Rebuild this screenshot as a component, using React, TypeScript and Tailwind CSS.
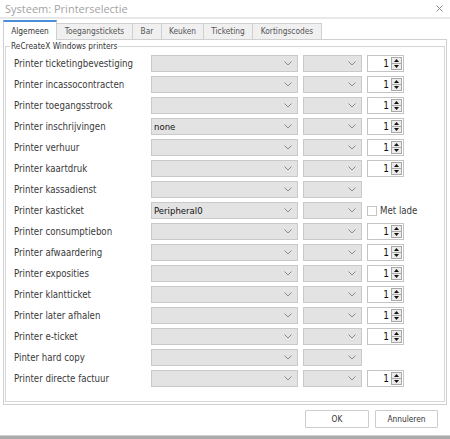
import React from 'react';

type Row = { label: string; value?: string; extra: 'spin' | 'none' | 'check' };

const rows: Row[] = [
  { label: 'Printer ticketingbevestiging', extra: 'spin' },
  { label: 'Printer incassocontracten', extra: 'spin' },
  { label: 'Printer toegangsstrook', extra: 'spin' },
  { label: 'Printer inschrijvingen', value: 'none', extra: 'spin' },
  { label: 'Printer verhuur', extra: 'spin' },
  { label: 'Printer kaartdruk', extra: 'spin' },
  { label: 'Printer kassadienst', extra: 'none' },
  { label: 'Printer kasticket', value: 'Peripheral0', extra: 'check' },
  { label: 'Printer consumptiebon', extra: 'spin' },
  { label: 'Printer afwaardering', extra: 'spin' },
  { label: 'Printer exposities', extra: 'spin' },
  { label: 'Printer klantticket', extra: 'spin' },
  { label: 'Printer later afhalen', extra: 'spin' },
  { label: 'Printer e-ticket', extra: 'spin' },
  { label: 'Pinter hard copy', extra: 'none' },
  { label: 'Printer directe factuur', extra: 'spin' },
];

const tabs = [
  { name: 'Algemeen', w: 'w-[54px]', active: true },
  { name: 'Toegangstickets', w: 'w-[77px]' },
  { name: 'Bar', w: 'w-[30px]' },
  { name: 'Keuken', w: 'w-[43px]' },
  { name: 'Ticketing', w: 'w-[50px]' },
  { name: 'Kortingscodes', w: 'w-[70px]' },
];

function Chevron() {
  return (
    <svg width="8" height="5" viewBox="0 0 8 5" className="shrink-0">
      <polyline points="0.5,0.5 4,4 7.5,0.5" fill="none" stroke="#8a8a8a" strokeWidth="1" />
    </svg>
  );
}

function Combo({ value, w }: { value?: string; w: string }) {
  return (
    <div className={`${w} h-[17px] bg-[#e3e3e3] border border-[#c9c9c9] flex items-center justify-between pl-[2px] pr-[5px]`}>
      <span className="text-[9.5px] text-[#111] leading-none">{value ?? ''}</span>
      <Chevron />
    </div>
  );
}

function Spin() {
  return (
    <div className="w-[37px] h-[17px] bg-white border border-[#c4c4c4] flex items-center justify-end pr-[1px]">
      <span className="text-[10px] text-[#111] leading-none mr-[2px]">1</span>
      <div className="w-[11px] h-[13px] flex flex-col border border-[#a9a9a9] bg-[#ececec]">
        <div className="flex-1 flex items-center justify-center border-b border-[#a9a9a9]">
          <svg width="5" height="3" viewBox="0 0 5 3"><polygon points="2.5,0 5,3 0,3" fill="#111" /></svg>
        </div>
        <div className="flex-1 flex items-center justify-center">
          <svg width="5" height="3" viewBox="0 0 5 3"><polygon points="0,0 5,0 2.5,3" fill="#111" /></svg>
        </div>
      </div>
    </div>
  );
}

export default function App() {
  return (
    <div className="w-[450px] h-[439px] bg-white flex flex-col overflow-hidden font-['DejaVu_Sans_Condensed','DejaVu_Sans',sans-serif] text-[#3a3a3a]">
      {/* title bar */}
      <div className="h-[19px] shrink-0 flex items-center justify-between pl-[5px] pr-[7px] border-b-2 border-[#e8e8e8]">
        <span className="font-['Open_Sans',sans-serif] text-[11px] text-[#a3a3a3] leading-none">Systeem: Printerselectie</span>
        <svg width="7" height="7" viewBox="0 0 7 7">
          <line x1="0.5" y1="0.5" x2="6.5" y2="6.5" stroke="#8c8c8c" strokeWidth="1" />
          <line x1="6.5" y1="0.5" x2="0.5" y2="6.5" stroke="#8c8c8c" strokeWidth="1" />
        </svg>
      </div>

      {/* tabs */}
      <div className="flex items-end h-[19px] pl-[3px] mt-[1px] shrink-0 relative z-10">
        {tabs.map((t) =>
          t.active ? (
            <div
              key={t.name}
              className={`${t.w} h-[20px] -mb-px bg-white border-t-2 border-t-[#4a90d9] border-x border-x-[#cfcfcf] flex items-center justify-center text-[8.3px] text-[#333]`}
            >
              {t.name}
            </div>
          ) : (
            <div
              key={t.name}
              className={`${t.w} h-[16px] bg-[#f0f0f0] border border-b-0 border-[#d0d0d0] -ml-px first:ml-0 flex items-center justify-center text-[8.3px] text-[#555]`}
            >
              {t.name}
            </div>
          )
        )}
      </div>

      {/* panel */}
      <div className="ml-[3px] w-[444px] h-[366px] shrink-0 border border-[#d0d0d0] px-px pb-[2px]">
        <fieldset className="border border-[#d6d6d6] h-full px-0 pt-0 pb-0 m-0">
          <legend className="ml-[4px] px-[1px] text-[8.3px] leading-[12px] text-[#333]">ReCreateX Windows printers</legend>
          <div className="pl-[8px] pt-px flex flex-col">
            {rows.map((r) => (
              <div key={r.label} className="h-[21px] flex items-center">
                <div className="w-[137px] text-[9.6px] leading-none whitespace-nowrap">{r.label}</div>
                <Combo w="w-[147px]" value={r.value} />
                <div className="w-[5px]" />
                <Combo w="w-[59px]" />
                <div className="w-[5px]" />
                {r.extra === 'spin' && <Spin />}
                {r.extra === 'check' && (
                  <div className="flex items-center">
                    <div className="w-[10px] h-[10px] border border-[#c4c4c4] bg-white" />
                    <span className="ml-[3px] text-[9.6px] leading-none">Met lade</span>
                  </div>
                )}
              </div>
            ))}
          </div>
        </fieldset>
      </div>

      {/* buttons */}
      <div className="flex justify-end gap-[6px] pr-[12px] mt-[5px] shrink-0">
        <button className="w-[64px] h-[18px] bg-white border border-[#cccccc] rounded-[1px] text-[8.3px] text-[#333] flex items-center justify-center">OK</button>
        <button className="w-[63px] h-[18px] bg-white border border-[#cccccc] rounded-[1px] text-[8.3px] text-[#333] flex items-center justify-center">Annuleren</button>
      </div>

      <div className="mt-auto h-[4px] shrink-0 border-t border-[#d0d0d0] bg-[#ababab]" />
    </div>
  );
}
